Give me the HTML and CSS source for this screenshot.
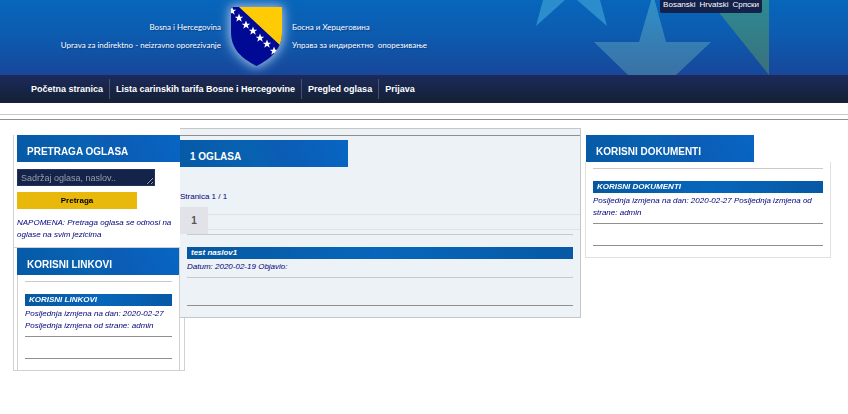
FILE: index.html
```html
<!DOCTYPE html>
<html lang="bs">
<head>
    <meta charset="UTF-8">
    <title>Uprava za indirektno - neizravno oporezivanje</title>
    <link rel="stylesheet" href="styles.css">
</head>
<body>
<header class="header">
    <svg class="header-art" width="312" height="75" viewBox="0 0 312 75" aria-hidden="true">
        <defs>
            <linearGradient id="starFill" x1="0" y1="0" x2="0" y2="1">
                <stop offset="0" stop-color="#2f92cc"/>
                <stop offset="1" stop-color="#3a71a4"/>
            </linearGradient>
            <linearGradient id="cornerFill" x1="0" y1="0" x2="0" y2="1">
                <stop offset="0" stop-color="#2c8b93"/>
                <stop offset="1" stop-color="#3b6f7c"/>
            </linearGradient>
        </defs>
        <path fill="#2c8dcd" d="M31 0h22L24 26zM65 0h23l7 26z"/>
        <path fill="url(#starFill)" d="M141-6l13 48h45l-35 33h-48L82 42h45z"/>
        <path fill="url(#cornerFill)" d="M197 0h60v75z"/>
    </svg>
    <div class="brand">
        <p class="brand-text brand-latin">Bosna i Hercegovina<br>Uprava za indirektno - neizravno oporezivanje</p>
        <svg class="coat" width="51" height="59" viewBox="0 0 51 59" role="img" aria-label="Grb">
            <defs>
                <clipPath id="shield"><path d="M0 0h51v25C51 42 41 51 25.500 59 10 51 0 42 0 25z"/></clipPath>
                <path id="star" d="M0-4.500L1.200-1.300 4.300-1.300 1.800.6 2.700 3.700 0 1.800-2.700 3.700-1.800.6-4.300-1.300-1.200-1.300z"/>
            </defs>
            <g clip-path="url(#shield)">
                <path fill="#000994" d="M0 0h51v59H0z"/>
                <path fill="#ffcb05" d="M8 0h43v40z"/>
                <g fill="#fff">
                    <use href="#star" x="1" y="4"/>
                    <use href="#star" x="8" y="11"/>
                    <use href="#star" x="15" y="18"/>
                    <use href="#star" x="22" y="24"/>
                    <use href="#star" x="29" y="31"/>
                    <use href="#star" x="36" y="37"/>
                    <use href="#star" x="43" y="44"/>
                </g>
            </g>
        </svg>
        <p class="brand-text" lang="sr">Босна и Херцеговина<br>Управа за индиректно&nbsp; опорезивање</p>
    </div>
    <div class="languages">
        <a href="#bs">Bosanski</a>
        <a href="#hr">Hrvatski</a>
        <a href="#sr">Српски</a>
    </div>
</header>
<nav class="menu">
    <a href="#pocetna">Početna stranica</a>
    <a href="#tarifa">Lista carinskih tarifa Bosne i Hercegovine</a>
    <a href="#oglasi">Pregled oglasa</a>
    <a href="#prijava">Prijava</a>
</nav>
<div class="double-line"></div>
<main class="content">
    <aside class="left">
        <form class="search">
            <h2 class="title">PRETRAGA OGLASA</h2>
            <textarea class="search-text" rows="1" aria-label="Pretraga oglasa" placeholder="Sadržaj oglasa, naslov.."></textarea>
            <button class="search-button" type="submit">Pretraga</button>
            <p class="note">NAPOMENA: Pretraga oglasa se odnosi na oglase na svim jezicima</p>
        </form>
        <section class="links">
            <h2 class="title">KORISNI LINKOVI</h2>
            <div class="box">
                <hr class="line light">
                <h3 class="subtitle">KORISNI LINKOVI</h3>
                <p class="info">Posljednja izmjena na dan: 2020-02-27 Posljednja izmjena od strane: admin</p>
                <hr class="line">
                <hr class="line last">
            </div>
        </section>
    </aside>
    <section class="ads">
        <h1 class="title short">1 OGLASA</h1>
        <p class="page-count">Stranica 1 / 1</p>
        <div class="pagination">
            <a class="page" href="#1">1</a>
            <div class="page-lines"></div>
        </div>
        <article class="box ad">
            <hr class="line light">
            <h3 class="subtitle">test naslov1</h3>
            <p class="info">Datum: 2020-02-19 Objavio:</p>
            <hr class="line light">
            <hr class="line last">
        </article>
    </section>
    <aside class="right">
        <h2 class="title short">KORISNI DOKUMENTI</h2>
        <div class="box">
            <hr class="line light">
            <h3 class="subtitle">KORISNI DOKUMENTI</h3>
            <p class="info">Posljednja izmjena na dan: 2020-02-27 Posljednja izmjena od strane: admin</p>
            <hr class="line">
            <hr class="line last">
        </div>
    </aside>
</main>
</body>
</html>
```
FILE: styles.css
```css
* {
    box-sizing: border-box;
}
body {
    margin: 0;
    background: #fff;
    color: #00007a;
    font-family: "Liberation Sans", Arial, sans-serif;
    font-size: 8px;
    line-height: 12px;
}
h1, h2, h3, p {
    margin: 0;
}
a {
    color: inherit;
    text-decoration: none;
}

/* header */
.header {
    position: relative;
    height: 75px;
    overflow: hidden;
    background: linear-gradient(#0766bb, #0c5cb0 45%, #17479a);
}
.header-art {
    position: absolute;
    top: 0;
    left: 512px;
}
.brand {
    display: flex;
    gap: 10px;
    padding-top: 7px;
}
.brand-text {
    padding-top: 11px;
    color: #fff;
    font-family: Lato, "Open Sans", sans-serif;
    font-size: 8px;
    line-height: 18px;
    text-shadow: 1px 1px 1px #0a3c80;
    white-space: nowrap;
}
.brand-latin {
    width: 221px;
    text-align: right;
}
.coat {
    filter: drop-shadow(0 0 4px #8fb4dd) drop-shadow(0 0 6px #6f9cd2);
}
.languages {
    position: absolute;
    top: 0;
    right: 86px;
    display: flex;
    gap: 4px;
    height: 13px;
    padding: 0 3px;
    border-radius: 0 0 2px 2px;
    background: #14214b;
    color: #fff;
    font-size: 8px;
    line-height: 10px;
}

/* menu */
.menu {
    display: flex;
    align-items: center;
    height: 28px;
    padding-left: 25px;
    background: linear-gradient(#1d2a5b, #142138 90%);
    color: #fff;
    font-size: 9px;
    font-weight: bold;
}
.menu a {
    padding: 1px 6px 0;
    line-height: 19px;
}
.menu a + a {
    border-left: 1px solid #4a5068;
}
.double-line {
    height: 6px;
    margin: 11px 0 8px;
    border-top: 1px solid #c8c8c8;
    border-bottom: 1px solid #909090;
}

/* columns */
.content {
    display: flex;
    align-items: flex-start;
    padding: 0 17px 0 13px;
}
.left {
    width: 172px;
    margin-top: 7px;
    border: 1px solid #d0d0d0;
    border-top: none;
}
.title {
    height: 27px;
    padding: 4px 10px 0;
    background: linear-gradient(60deg, #0659a5, #0862b2 45%, #0b5cb4 60%, #0766c4);
    color: #fff;
    font-size: 10px;
    line-height: 25px;
}
.short {
    width: 168px;
}
.search {
    padding: 0 4px 6px 3px;
    border-bottom: 1px solid #d0d0d0;
}
.search-text {
    display: block;
    width: 138px;
    height: 17px;
    margin-top: 7px;
    padding: 2px 3px;
    border: 1px solid #24345f;
    background: #14234a;
    color: #fff;
    font: 9px/12px "Liberation Sans", Arial, sans-serif;
}
.search-text::placeholder {
    color: #9a9faa;
}
.search-button {
    display: block;
    width: 120px;
    height: 17px;
    margin: 6px 0 8px;
    padding: 0;
    border: none;
    background: #e8b90b;
    color: #000;
    font: bold 8px "Liberation Sans", Arial, sans-serif;
    cursor: pointer;
}
.note, .info {
    font-style: italic;
}
.links {
    margin: 0 4px 0 3px;
    border: solid #d0d0d0;
    border-width: 0 1px;
}
.links .title {
    margin-left: -1px;
}
.box {
    padding: 6px 7px 11px;
}
.line {
    height: 1px;
    margin: 0;
    border: none;
    background: #909090;
}
.light {
    background: #c8cacc;
}
.last {
    margin-top: 21px;
}
.subtitle {
    margin: 12px 0 2px;
    padding-left: 4px;
    background: linear-gradient(90deg, #0658a0, #0766bb 50%, #0659a5);
    color: #fff;
    font-size: 8px;
    font-style: italic;
    line-height: 12px;
}
.info + .line {
    margin-top: 4px;
}

/* ads */
.ads {
    position: relative;
    flex: 1;
    margin-left: -5px;
    border: 1px solid #c4c6c8;
    border-left: none;
    background: #edf2f7;
}
.ads::before {
    content: "";
    display: block;
    height: 6px;
    margin-bottom: 4px;
    border-bottom: 1px solid #909090;
}
.page-count {
    margin: 24px 0 4px;
}
.pagination {
    display: flex;
    height: 27px;
}
.page {
    width: 28px;
    background: #e1e3e9;
    color: #555;
    font-size: 10px;
    font-weight: bold;
    line-height: 27px;
    text-align: center;
}
.page-lines {
    flex: 1;
    height: 16px;
    margin-top: 7px;
    border: solid #dfe3e7;
    border-width: 1px 0;
}
.ad {
    padding-top: 0;
}
.ad .last {
    margin-top: 27px;
}

/* documents */
.right {
    width: 246px;
    margin: 7px 0 0 4px;
}
.right .title {
    margin-left: 1px;
}
.right .box {
    border: 1px solid #e0e0e0;
    border-top: none;
}
```
